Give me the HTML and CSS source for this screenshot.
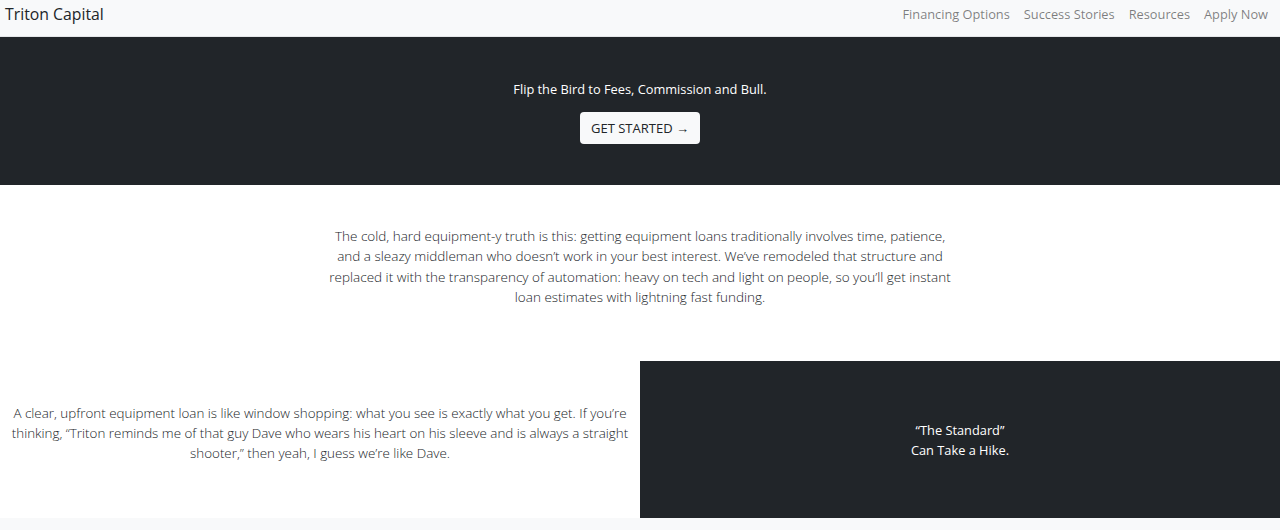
FILE: index.html
```html
<!DOCTYPE html>
<html lang="en">
<head>
  <meta charset="UTF-8">
  <title>Triton Capital</title>
  <link rel="stylesheet" href="styles.css">
</head>
<body>
  <!-- Navbar -->
  <nav class="navbar">
    <a href="#" class="brand">Triton Capital</a>
    <div class="nav-links">
      <a href="#" class="nav-link">Financing Options</a>
      <a href="#" class="nav-link">Success Stories</a>
      <a href="#" class="nav-link">Resources</a>
      <a href="#" class="nav-link">Apply Now</a>
    </div>
  </nav>

  <!-- Hero -->
  <section class="hero">
    <p class="hero-text">Flip the Bird to Fees, Commission and Bull.</p>
    <a href="#" class="btn-light">GET STARTED &rarr;</a>
  </section>

  <!-- Intro -->
  <section class="intro">
    <p>The cold, hard equipment-y truth is this: getting equipment loans traditionally involves time, patience, and a sleazy middleman who doesn&rsquo;t work in your best interest. We&rsquo;ve remodeled that structure and replaced it with the transparency of automation: heavy on tech and light on people, so you&rsquo;ll get instant loan estimates with lightning fast funding.</p>
  </section>

  <!-- Split -->
  <section class="split">
    <div class="split-text">
      <p>A clear, upfront equipment loan is like window shopping: what you see is exactly what you get. If you&rsquo;re thinking, &ldquo;Triton reminds me of that guy Dave who wears his heart on his sleeve and is always a straight shooter,&rdquo; then yeah, I guess we&rsquo;re like Dave.</p>
    </div>
    <div class="split-dark">
      <p>&ldquo;The Standard&rdquo;<br>Can Take a Hike.</p>
    </div>
  </section>

  <footer class="footer"></footer>
</body>
</html>
```

FILE: styles.css
```css
body {
  margin: 0;
  font-family: "Open Sans", Arial, sans-serif;
  font-size: 12.8px;
  line-height: 1.5;
  color: #212529;
  background: #fff;
}

p {
  margin: 0;
}

a {
  text-decoration: none;
}

.navbar {
  display: flex;
  align-items: flex-start;
  justify-content: space-between;
  height: 37px;
  padding: 3px 5px 0;
  background: #f8f9fa;
  border-bottom: 1px solid #e4e6e8;
  box-sizing: border-box;
}

.brand {
  font-size: 15.8px;
  line-height: 22px;
  color: #212529;
}

.nav-links {
  display: flex;
}

.nav-link {
  padding: 0 7px;
  font-size: 12.8px;
  line-height: 22px;
  color: rgba(0,0,0,0.5);
}

.hero {
  background: #212529;
  color: #fff;
  text-align: center;
  padding: 42px 0 41px;
}

.hero-text {
  line-height: 20px;
  margin-bottom: 13px;
}

.btn-light {
  display: inline-block;
  height: 32px;
  line-height: 32px;
  padding: 0 11px;
  background: #f8f9fa;
  color: #212529;
  font-size: 13px;
  border-radius: 4px;
  box-sizing: border-box;
}

.intro {
  padding: 41px 0 53px;
}

.intro p {
  max-width: 630px;
  margin: 0 auto;
  text-align: center;
  font-size: 13.5px;
  font-weight: 300;
  line-height: 20.4px;
}

.split {
  display: grid;
  grid-template-columns: 1fr 1fr;
  height: 157px;
}

.split-text {
  padding: 42px 8px 0;
  text-align: center;
  font-size: 13.4px;
  font-weight: 300;
  line-height: 20.4px;
}

.split-dark {
  display: flex;
  align-items: center;
  justify-content: center;
  padding-top: 2px;
  background: #212529;
  color: #fff;
  text-align: center;
  line-height: 20px;
}

.footer {
  height: 12px;
  background: #f8f9fa;
}
```
